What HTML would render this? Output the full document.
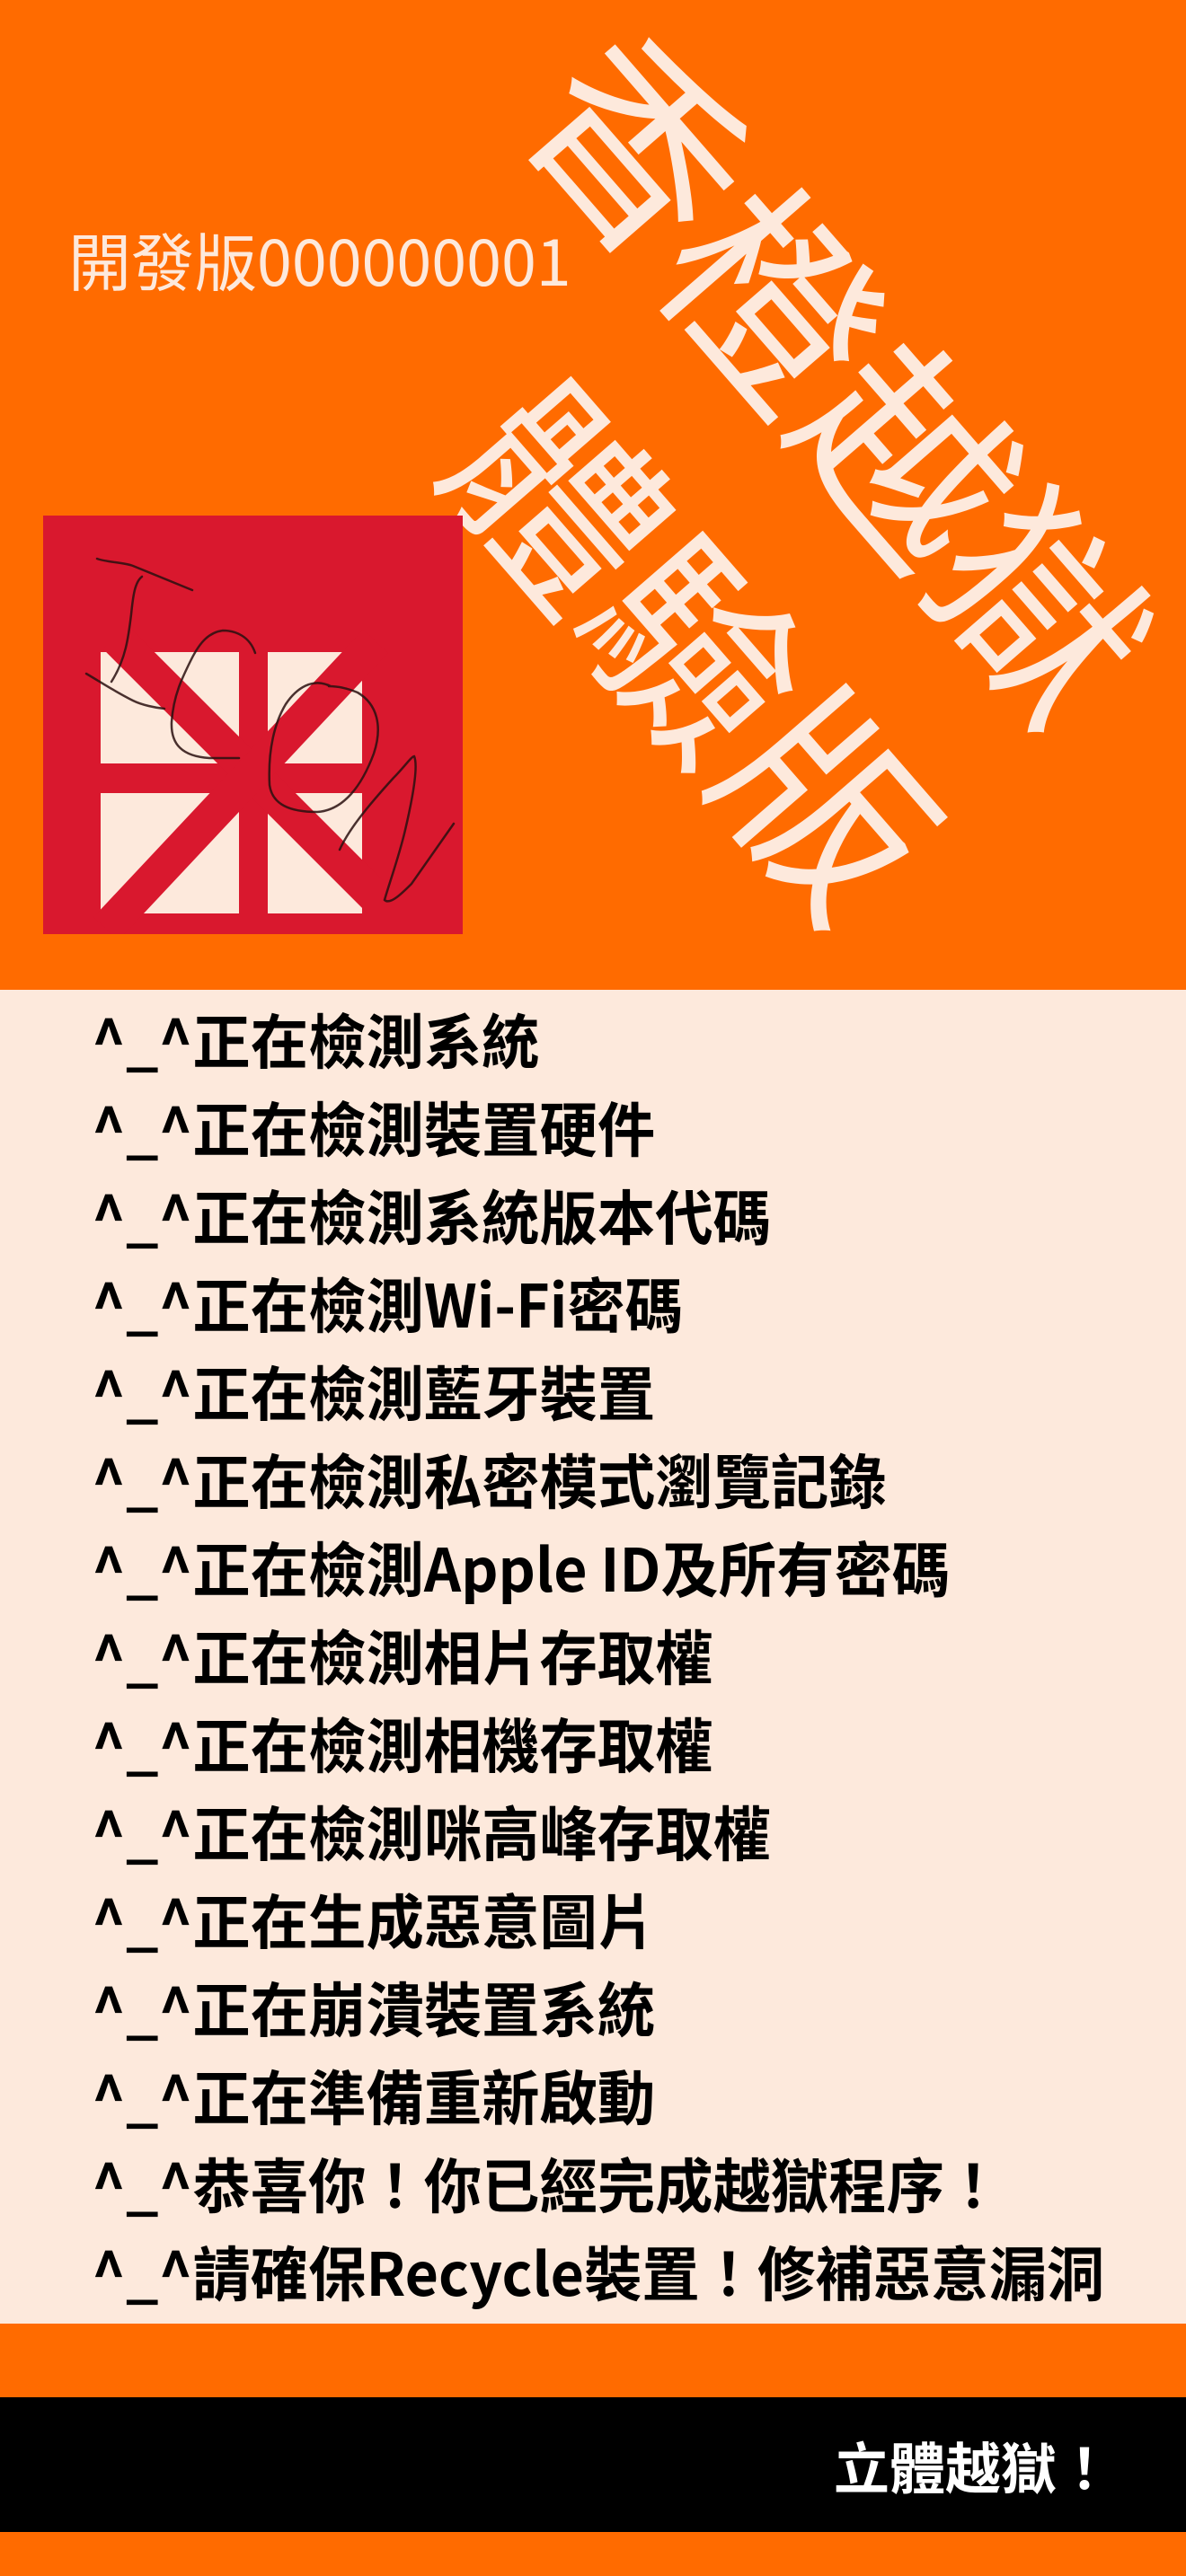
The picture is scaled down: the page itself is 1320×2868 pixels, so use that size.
<!DOCTYPE html>
<html><head><meta charset="utf-8"><style>
*{margin:0;padding:0;box-sizing:border-box}
html,body{width:1320px;height:2868px;overflow:hidden;background:#ff6b00}
body{position:relative;font-family:"Noto Sans CJK TC",sans-serif}
.top{position:absolute;left:0;top:0;width:1320px;height:1102px;background:#ff6b00;overflow:hidden}
.dev{position:absolute;left:76px;top:244px;font-size:70px;color:#fde9dc;font-family:"Noto Sans CJK TC",sans-serif;line-height:90px;white-space:nowrap}
.big{position:absolute;color:#fde9dc;font-family:"Noto Sans CJK TC",sans-serif;font-size:228px;line-height:1;white-space:nowrap;transform:translate(-50%,-50%) rotate(49deg)}
.red{position:absolute;left:48px;top:574px;width:467px;height:466px;background:#d9182e}
.list{position:absolute;left:0;top:1102px;width:1320px;height:1485px;background:#fde9dc}
.list div{position:absolute;left:102px;font-size:66px;font-weight:bold;color:#000;white-space:nowrap;line-height:98px;font-family:"Noto Sans CJK TC",sans-serif;transform:scaleX(0.975);transform-origin:left}
.bar{position:absolute;left:0;top:2669px;width:1320px;height:150px;background:#000}
.bar span{position:absolute;left:928px;top:40px;font-size:62px;color:#fff;font-weight:bold;line-height:70px;font-family:"Noto Sans CJK TC",sans-serif;white-space:nowrap}
</style></head><body>
<div class="top">
<div class="dev">開發版000000001</div>
<div class="big" style="left:945px;top:410px">香橙越獄</div>
<div class="big" style="left:782px;top:716px">體驗版</div>
<div class="red">
<svg width="467" height="466" viewBox="0 0 467 466">
<rect x="64" y="152" width="154" height="124" fill="#fde9dc"/>
<rect x="250" y="152" width="105" height="124" fill="#fde9dc"/>
<rect x="64" y="309" width="154" height="134" fill="#fde9dc"/>
<rect x="250" y="309" width="105" height="134" fill="#fde9dc"/>
<line x1="80" y1="135" x2="375" y2="430" stroke="#d9182e" stroke-width="38"/>
<line x1="370" y1="140" x2="70" y2="460" stroke="#d9182e" stroke-width="38"/>
<g fill="none" stroke="#2a1010" stroke-width="2.5" stroke-linecap="round" opacity="0.85">
<path d="M60 48 C70 52 90 52 100 56 L166 83"/>
<path d="M110 68 C102 74 100 90 98 110 C95 135 92 160 76 185"/>
<path d="M48 176 C65 186 80 196 100 206 C110 211 125 214 135 215"/>
<path d="M236 153 C230 135 215 128 200 128 C185 130 175 140 165 160 C155 180 145 200 143 230 C142 255 155 268 185 270 L218 270"/>
<path d="M320 190 C300 180 282 192 270 210 C258 230 250 260 252 300 C255 322 275 330 305 330 C335 328 355 300 368 265 C378 235 372 210 350 197 C338 192 328 190 318 190"/>
<path d="M330 372 C340 350 360 325 390 292 C402 280 410 268 413 268 C418 280 410 320 403 350 C396 380 385 410 380 428 C386 434 400 420 410 410 L457 343"/>
</g>
</svg>
</div>
</div>
<div class="list">
<div style="top:5px">^_^正在檢測系統</div>
<div style="top:103px">^_^正在檢測裝置硬件</div>
<div style="top:201px">^_^正在檢測系統版本代碼</div>
<div style="top:299px">^_^正在檢測Wi-Fi密碼</div>
<div style="top:397px">^_^正在檢測藍牙裝置</div>
<div style="top:495px">^_^正在檢測私密模式瀏覽記錄</div>
<div style="top:593px">^_^正在檢測Apple ID及所有密碼</div>
<div style="top:691px">^_^正在檢測相片存取權</div>
<div style="top:789px">^_^正在檢測相機存取權</div>
<div style="top:887px">^_^正在檢測咪高峰存取權</div>
<div style="top:985px">^_^正在生成惡意圖片</div>
<div style="top:1083px">^_^正在崩潰裝置系統</div>
<div style="top:1181px">^_^正在準備重新啟動</div>
<div style="top:1279px">^_^恭喜你！你已經完成越獄程序！</div>
<div style="top:1377px">^_^請確保Recycle裝置！修補惡意漏洞</div>
</div>
<div class="bar"><span>立體越獄！</span></div>
</body></html>
